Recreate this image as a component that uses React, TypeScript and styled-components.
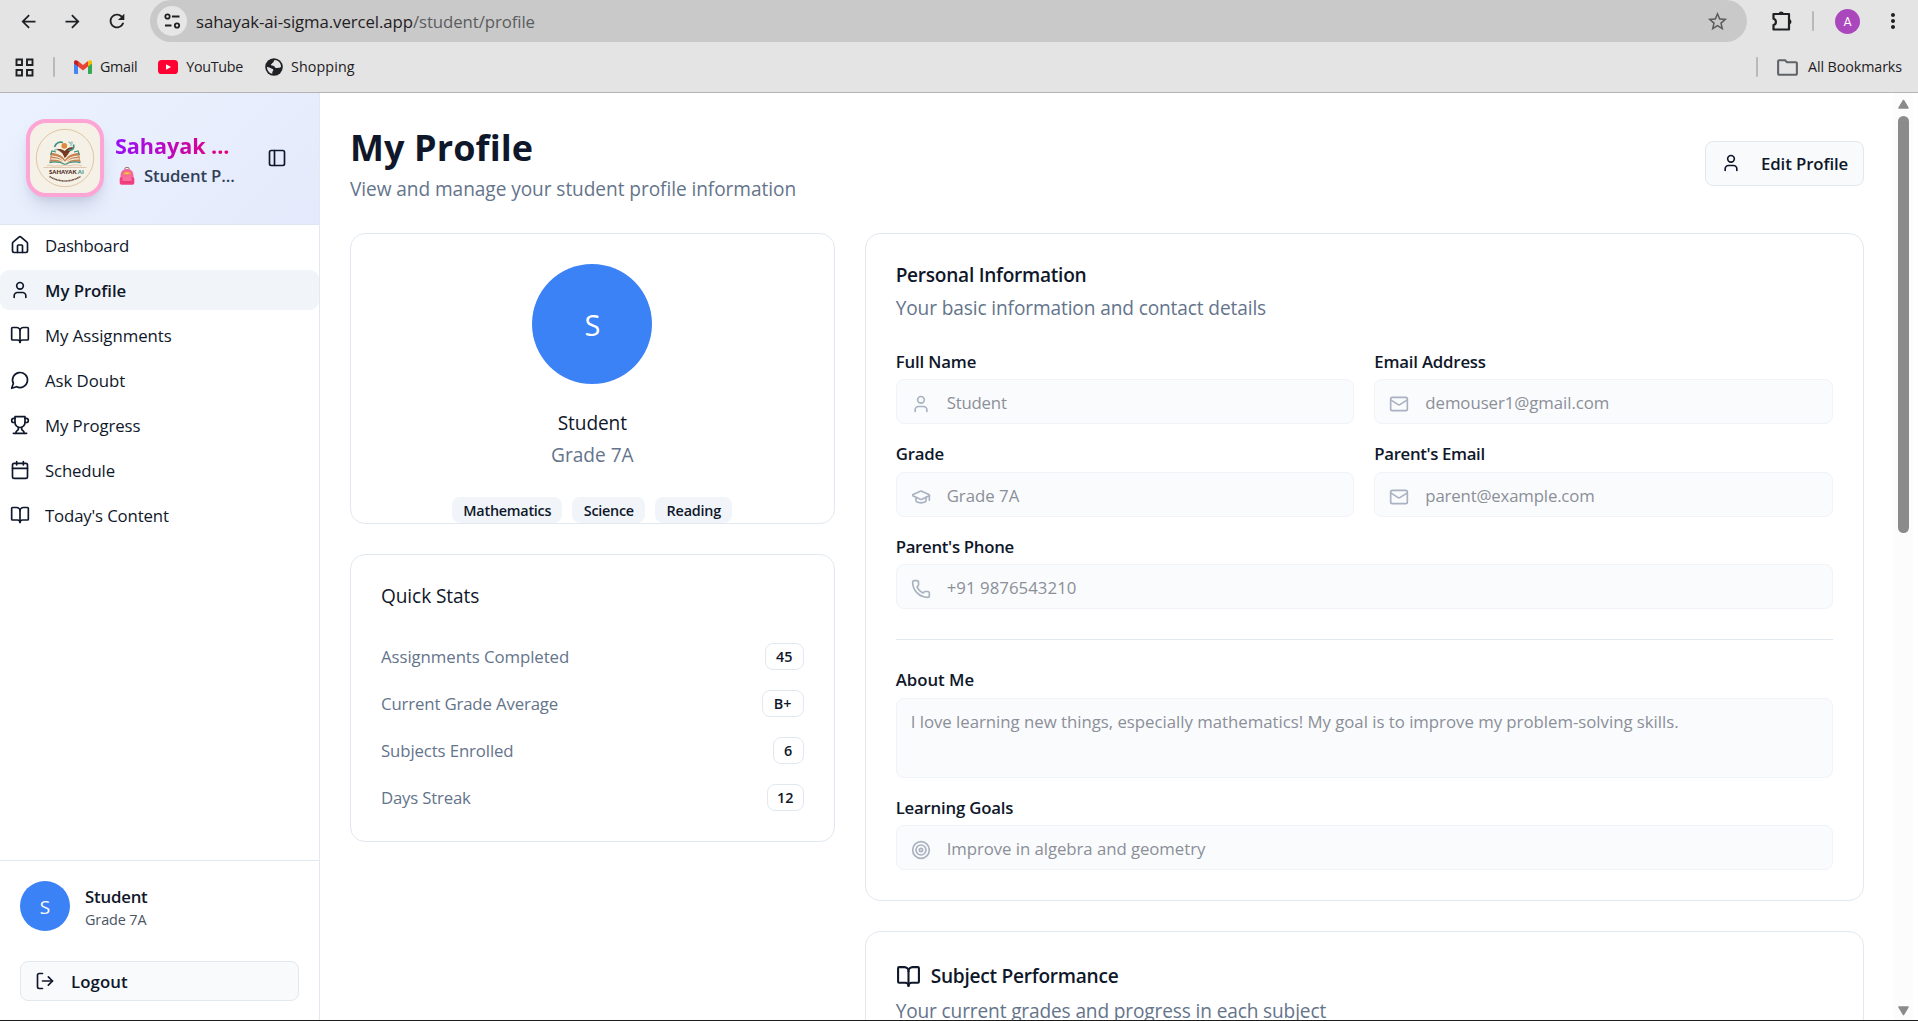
import React from "react";
import styled, { createGlobalStyle, css } from "styled-components";
import {
  BookOpen,
  Calendar,
  GraduationCap,
  House,
  LogOut,
  Mail,
  PanelLeft,
  Phone,
  Target,
  User,
} from "lucide-react";
import { MdArrowBack, MdArrowForward, MdMoreVert, MdOutlineFolder, MdRefresh, MdStarBorder } from "react-icons/md";

const ink = "#0f172a";
const muted = "#64748b";
const line = "#e2e8f0";
const blue = "#3b82f6";

const GlobalStyle = createGlobalStyle`
  *, *::before, *::after { box-sizing: border-box; }
  body {
    margin: 0;
    overflow: hidden;
    background: #fff;
    color: ${ink};
    font-family: "Open Sans", "Noto Sans", sans-serif;
    font-size: 16.8px;
  }
  svg { flex: none; display: block; }
  h1, h2, h3, p { margin: 0; font-weight: 400; }
  button { font: inherit; color: inherit; }
`;

/* letter spacing in px, tuned per string */
const track = css<{ $t?: number }>`
  letter-spacing: ${(p) => p.$t ?? -0.1}px;
  white-space: nowrap;
`;

const Screen = styled.div`
  display: flex;
  flex-direction: column;
  width: 1918px;
  height: 1021px;
  overflow: hidden;
  border-bottom: 1px solid #1c1c1c;
`;

/* ---------- browser chrome ---------- */

const Chrome = styled.header`
  flex: none;
  height: 93px;
  background: #e4e4e4;
  border-bottom: 1px solid #b4b4b4;
  color: #1f2023;
`;

const Toolbar = styled.div`
  display: flex;
  align-items: center;
  height: 42px;
  padding-left: 16px;
`;

const ToolIcon = styled.span<{ $w: number }>`
  display: flex;
  flex: none;
  justify-content: center;
  width: ${(p) => p.$w}px;
`;

const AddressBar = styled.div`
  display: flex;
  align-items: center;
  flex: none;
  width: 1597px;
  height: 42px;
  margin-left: 21px;
  padding: 0 18px 0 7px;
  background: #c9c9c9;
  border-radius: 21px;
`;

const SiteInfo = styled.span`
  display: grid;
  place-items: center;
  width: 30px;
  height: 30px;
  border-radius: 50%;
  background: #e6e6e6;
`;

const Url = styled.span`
  flex: 1;
  margin-left: 9px;
  font-size: 16.8px;
  ${track}
  span { color: #5b5c5e; }
`;

const Divider = styled.span<{ $m: string }>`
  flex: none;
  width: 2px;
  height: 20px;
  margin: ${(p) => p.$m};
  border-radius: 1px;
  background: #b9b9b9;
`;

const ProfileDot = styled.span`
  display: grid;
  flex: none;
  place-items: center;
  width: 25px;
  height: 25px;
  border-radius: 50%;
  background: #ab47bc;
  color: #fff;
  font: 12.5px Roboto, sans-serif;
`;

const Bookmarks = styled.div`
  display: flex;
  align-items: center;
  height: 50px;
  padding: 0 16px 0 15px;
  font-size: 14.3px;
`;

const Bookmark = styled.span<{ $ml: number; $gap: number; $t?: number }>`
  display: flex;
  align-items: center;
  gap: ${(p) => p.$gap}px;
  margin-left: ${(p) => p.$ml}px;
  line-height: 20px;
  ${track}
`;

const BookmarkText = styled.span`
  padding-bottom: 1px;
`;

const Spacer = styled.span`
  flex: 1;
`;

/* ---------- page ---------- */

const Page = styled.div`
  display: flex;
  flex: 1;
  min-height: 0;
`;

const Sidebar = styled.aside`
  display: flex;
  flex-direction: column;
  flex: none;
  width: 320px;
  border-right: 1px solid ${line};
`;

const Brand = styled.div`
  display: flex;
  align-items: center;
  height: 132px;
  padding: 0 32px 2px 26px;
  background: linear-gradient(135deg, #ebf2fe 0%, #e4eafb 100%);
  border-bottom: 1px solid #dfe5f1;
`;

const LogoFrame = styled.div`
  flex: none;
  width: 78px;
  height: 78px;
  border: 4px solid #fda5d5;
  border-radius: 20px;
  background: #f5f1e6;
  box-shadow: 0 12px 19px -4px rgba(40, 55, 100, 0.15), 0 5px 8px -4px rgba(40, 55, 100, 0.12);
`;

const BrandText = styled.div`
  flex: 1;
  margin-left: 11px;
  padding-top: 5px;
`;

const BrandName = styled.div<{ $t?: number }>`
  width: max-content;
  font-size: 21.6px;
  line-height: 30px;
  font-weight: 700;
  ${track}
  background: linear-gradient(90deg, #9810fa, #e60076);
  background-clip: text;
  -webkit-background-clip: text;
  color: transparent;
`;

const Portal = styled.div<{ $t?: number }>`
  display: flex;
  align-items: center;
  gap: 9px;
  padding-left: 4px;
  margin-top: 1px;
  line-height: 28px;
  font-weight: 600;
  color: #314158;
  ${track}
`;

const Nav = styled.nav`
  display: flex;
  flex-direction: column;
  flex: 1;
  gap: 5px;
`;

const NavItem = styled.a<{ $active?: boolean; $t?: number }>`
  display: flex;
  align-items: center;
  gap: 15px;
  height: 40px;
  padding-left: 10px;
  border-radius: 9px;
  background: ${(p) => (p.$active ? "#f1f5f9" : "transparent")};
  font-weight: ${(p) => (p.$active ? 600 : 400)};
  ${track}
`;

const Account = styled.div`
  flex: none;
  height: 160px;
  padding: 20px;
  border-top: 1px solid ${line};
`;

const Person = styled.div`
  display: flex;
  align-items: center;
  gap: 15px;
`;

const Avatar = styled.div<{ $size: number; $font: number }>`
  display: grid;
  place-items: center;
  flex: none;
  width: ${(p) => p.$size}px;
  height: ${(p) => p.$size}px;
  padding-top: 1px;
  border-radius: 50%;
  background: ${blue};
  color: #fff;
  font-size: ${(p) => p.$font}px;
`;

const PersonText = styled.div`
  padding-top: 2px;
`;

const PersonName = styled.div<{ $t?: number }>`
  font-weight: 600;
  line-height: 24px;
  ${track}
`;

const PersonGrade = styled.div<{ $t?: number }>`
  font-size: 14.4px;
  line-height: 21px;
  color: #4a5565;
  ${track}
`;

const Button = styled.button<{ $h: number; $w: number; $gap: number; $pl: number; $t?: number }>`
  display: flex;
  align-items: center;
  gap: ${(p) => p.$gap}px;
  width: ${(p) => p.$w}px;
  height: ${(p) => p.$h}px;
  padding: 0 0 0 ${(p) => p.$pl}px;
  border: 1px solid ${line};
  border-radius: 8px;
  background: #f8fafc;
  font-weight: 600;
  ${track}
`;

const LogoutRow = styled.div`
  margin-top: 30px;
`;

const Main = styled.main`
  flex: 1;
  min-width: 0;
  padding: 30px 30px 0;
  overflow: hidden;
`;

const PageHead = styled.div`
  display: flex;
  justify-content: space-between;
  align-items: center;
  height: 80px;
  margin-bottom: 30px;
`;

const Title = styled.h1<{ $t?: number }>`
  && { font-weight: 700; }
  margin-top: 3px;
  font-size: 36px;
  line-height: 48px;
  ${track}
`;

const Lead = styled.p<{ $t?: number }>`
  margin-top: 1px;
  font-size: 19.1px;
  line-height: 32px;
  color: ${muted};
  ${track}
`;

const Columns = styled.div`
  display: grid;
  grid-template-columns: repeat(3, 1fr);
  gap: 30px;
  align-items: start;
`;

const Column = styled.div<{ $span?: number }>`
  display: grid;
  gap: 30px;
  grid-column: span ${(p) => p.$span ?? 1};
`;

const Card = styled.section<{ $h: number; $pt: number }>`
  height: ${(p) => p.$h}px;
  padding: ${(p) => p.$pt}px 30px 0;
  border: 1px solid ${line};
  border-radius: 15px;
  background: #fff;
`;

const ProfileCard = styled(Card)`
  display: flex;
  flex-direction: column;
  align-items: center;
`;

const CardTitle = styled.h2<{ $strong?: boolean; $t?: number }>`
  && { font-weight: ${(p) => (p.$strong ? 600 : 400)}; }
  display: flex;
  align-items: center;
  gap: 10px;
  font-size: 19.1px;
  line-height: 30px;
  ${track}
`;

const CardSub = styled(Lead)<{ $mt: number }>`
  margin-top: ${(p) => p.$mt}px;
  line-height: 30px;
`;

const ProfileName = styled(CardTitle)`
  margin-top: 24px;
`;

const Badges = styled.div`
  display: flex;
  gap: 10px;
  margin-top: 27px;
`;

const Badge = styled.span<{ $w: number; $outline?: boolean; $t?: number }>`
  display: flex;
  align-items: center;
  justify-content: center;
  width: ${(p) => p.$w}px;
  height: ${(p) => (p.$outline ? 27 : 26)}px;
  border: 1px solid ${(p) => (p.$outline ? line : "transparent")};
  border-radius: 8px;
  background: ${(p) => (p.$outline ? "#fff" : "#f1f5f9")};
  font-size: 14.4px;
  font-weight: 600;
  ${track}
`;

const Stats = styled.div`
  display: grid;
  gap: 20px;
  margin-top: 32px;
`;

const Stat = styled.div<{ $t?: number }>`
  display: flex;
  justify-content: space-between;
  align-items: center;
  height: 27px;
  color: ${muted};
  ${track}
  ${Badge} { color: ${ink}; }
`;

const Fields = styled.div`
  display: grid;
  grid-template-columns: 1fr 1fr;
  gap: 17.2px 20px;
  margin-top: 26px;
`;

const Field = styled.div<{ $wide?: boolean }>`
  grid-column: ${(p) => (p.$wide ? "1 / -1" : "auto")};
`;

const Label = styled.div<{ $t?: number; $gap?: number }>`
  font-weight: 600;
  line-height: 25px;
  margin-bottom: ${(p) => p.$gap ?? 5.2}px;
  ${track}
`;

const Input = styled.div<{ $t?: number }>`
  display: flex;
  align-items: center;
  gap: 16px;
  height: 45px;
  padding: 2px 14px 0;
  border: 1px solid #f0f3f8;
  border-radius: 8px;
  background: #fafbfd;
  color: #8b8f98;
  ${track}
  svg { color: #a9b2c0; margin-top: 3px; }
`;

const TextArea = styled(Input)`
  display: block;
  height: 80px;
  padding-top: 10px;
  line-height: 25px;
`;

const Rule = styled.hr`
  height: 1px;
  margin: 30px 0 0;
  border: 0;
  background: ${line};
`;

const About = styled.div`
  display: grid;
  gap: 17px;
  margin-top: 27px;
`;

const ScrollTrack = styled.div`
  display: flex;
  flex-direction: column;
  align-items: center;
  flex: none;
  width: 19px;
  margin-right: 5px;
  padding: 6px 0 4px;
  background: #fcfcfc;
`;

const Thumb = styled.div`
  width: 11px;
  height: 417px;
  margin: 7px 0 auto;
  border-radius: 6px;
  background: #8b8b8b;
`;

/* ---------- drawings ---------- */

const Tune = () => (
  <svg width="17" height="18" viewBox="0 0 17 18" fill="none" stroke="#1f2023" strokeWidth="1.8">
    <circle cx="3.5" cy="4.5" r="2.2" />
    <path d="M8 4.500h7.500M1 13.500h6.500" />
    <circle cx="13" cy="13.500" r="2.200" />
  </svg>
);

const Puzzle = () => (
  <svg width="22" height="22" viewBox="0 0 22 22" fill="none" stroke="#1f2023" strokeWidth="2.2" strokeLinejoin="round">
    <path d="M2.500 4H18V19.500H2.500V15a3.200 3.200 0 0 0 0-6.200Z" />
    <path d="M7.500 3.500a2.900 2.900 0 0 1 5.500 0ZM18.500 9a2.900 2.900 0 0 1 0 5.500Z" fill="#1f2023" stroke="none" />
  </svg>
);

const AppsGrid = () => (
  <svg width="19" height="19" viewBox="0 0 19 19" fill="none" stroke="#1f2023" strokeWidth="1.9">
    <path d="M1.500 1.500h5.500v5.500h-5.500zM12 1.500h5.500v5.500h-5.500zM1.500 12h5.500v5.500h-5.500zM12 12h5.500v5.500h-5.500z" />
  </svg>
);

const Gmail = () => (
  <svg width="18" height="14" viewBox="0 0 18 14">
    <path d="M0 2.500V12.700c0 .7.500 1.300 1.300 1.300H4V5.800Z" fill="#4285f4" />
    <path d="M18 2.500V12.700c0 .7-.5 1.300-1.300 1.300H14V5.800Z" fill="#34a853" />
    <path d="M14 1.400C15.500-.200 18-.200 18 2v1.500l-4 3Z" fill="#fbbc04" />
    <path d="M0 3.500V2C0-.200 2.500-.200 4 1.100v5.500Z" fill="#c5221f" />
    <path d="M4 6.600V1.100l5 3.900 5-3.900v5.500l-5 3.900Z" fill="#ea4335" />
  </svg>
);

const YouTube = () => (
  <svg width="20" height="14" viewBox="0 0 20 14">
    <rect width="20" height="14" rx="3.600" fill="#ff0033" />
    <path d="M8 4.200v5.600l5-2.800Z" fill="#fff" />
  </svg>
);

const Globe = () => (
  <svg width="18" height="18" viewBox="0 0 18 18">
    <circle cx="9" cy="9" r="8.800" fill="#202124" />
    <path d="M9.500 2c-1 1.200-.3 1.700-1.500 2.400-1.200.5-.7 1.700-2 1.900-.4 1 .6 1.400 2.200 1.500 1.800.2 1.300 1.900 2.600 2.200 1.200.2 1.800-.6 3.200-.3 1.200.3 1.900-.4 2-1.100C16 5 13.300 2.200 9.500 2ZM2 8.700c1.700.5 3.300 1 4.300 1.800.9.700 1.800.3 2 1.400.1 1.200-1.100 1.200-1 2.300v1.600C4.100 15.100 1.900 12.200 2 8.700Z" fill="#e4e4e4" />
  </svg>
);

const Bubble = () => (
  <svg width="20" height="20" viewBox="0 0 24 24" fill="none" stroke="currentColor" strokeWidth="2" strokeLinecap="round" strokeLinejoin="round">
    <path d="M7.900 20A9 9 0 1 0 4 16.100L2 22Z" />
  </svg>
);

const TrophyIcon = () => (
  <svg width="20" height="20" viewBox="0 0 24 24" fill="none" stroke="currentColor" strokeWidth="2" strokeLinecap="round" strokeLinejoin="round">
    <path d="M6 9H4.500a2.500 2.500 0 0 1 0-5H6M18 9h1.500a2.500 2.500 0 0 0 0-5H18M4 22h16" />
    <path d="M10 14.660V17c0 .55-.47.98-.97 1.210C7.850 18.750 7 20.240 7 22M14 14.660V17c0 .55.47.98.97 1.210C16.150 18.750 17 20.240 17 22" />
    <path d="M18 2H6v7a6 6 0 0 0 12 0V2Z" />
  </svg>
);

const Backpack = () => (
  <svg width="16" height="18" viewBox="0 0 16 18">
    <path d="M5.800 2.500V1.800a2.200 1.500 0 0 1 4.400 0v.7" fill="none" stroke="#9c6a63" strokeWidth="1" />
    <path d="M1.500 9C1.500 4.500 4 2 8 2S14.500 4.500 14.500 9v8h-13Z" fill="#f0699b" />
    <path d="M5 5.200h6l.8 2.300H4.200Z" fill="#f3a63b" />
    <path d="M6.500 5.500h3v1.300h-3Z" fill="#f8cf52" />
    <rect x="0.700" y="10" width="14.600" height="7.700" rx="1.800" fill="#f4407f" />
    <path d="M3.500 9.500h9v3.700a1.300 1.300 0 0 1-1.300 1.300H4.800a1.300 1.300 0 0 1-1.300-1.300Z" fill="#fb6f9f" />
    <path d="M3.500 14.800h9" stroke="#d92c6c" strokeWidth="0.800" />
  </svg>
);

const Logo = () => (
  <svg width="70" height="70" viewBox="0 0 70 70">
    <circle cx="35" cy="35" r="28.700" fill="none" stroke="#dfbf9b" strokeWidth="0.900" />
    <path d="M21 30c6 0 11 2 14 7 3-5 8-7 14-7l1.500 9c-6-1-11-.5-15.500 2-4.500-2.500-9.500-3-15.500-2Z" fill="#c98350" />
    <path d="M21.500 33c6 0 10.500 2.500 13.500 6.500 3-4 7.500-6.500 13.500-6.500M20.500 36c7-.5 11.500 1.500 14.500 4.500 3-3 7.500-5 14.500-4.500" fill="none" stroke="#f5f1e6" strokeWidth="1.100" />
    <path d="M19.500 39.500c6-1.200 11-.5 15.500 2 4.500-2.500 9.500-3.200 15.500-2" fill="none" stroke="#3f8f80" strokeWidth="1.300" />
    <path d="M20.500 32l1.500-4 4 1M49.500 32l-1.500-4-4 1" fill="none" stroke="#3f8f80" strokeWidth="1.200" />
    <path d="M25 26.500c4-1 7-.5 9.500 1.500 3-3 5.500-4.500 9-3.500-1.500 3-4 3.500-5 6-1.500 2.500-2.500 3.500-4 4.500-1-4.500-4-7.500-9.500-8.500Z" fill="#75391f" />
    <path d="M24.500 24c1.500-4 5-5.500 8.500-4.500M38.500 27c4.500 1 6-2.500 5-5.500" fill="none" stroke="#3f8f80" strokeWidth="1.700" />
    <path d="M38.500 19c2 .5 3 2 2.500 4M41.500 18.500l1 2M24 27.500l3.500-1.500" fill="none" stroke="#8bc0b4" strokeWidth="1.300" />
    <circle cx="34.300" cy="22.800" r="2.900" fill="#e0893a" />
    <path d="M13.500 44.500h43M17 43c3-2 5 .8 8 0s5 .8 8-.5 5 .8 8 0 8-1 11 .5" fill="none" stroke="#dcbc9e" strokeWidth="0.800" />
    <text x="19" y="50.600" fontFamily="Lato, sans-serif" fontWeight="900" fontSize="5.900" letterSpacing="0.050" fill="#4a2418">
      SAHAYAK <tspan fill="#3f8f80">AI</tspan>
    </text>
    <path d="M19.500 53.500Q35 62.500 50.500 53.500" fill="none" stroke="#6b4a3a" strokeWidth="1.500" strokeDasharray="1.300 0.350 0.900 0.300 1.100 0.400" />
  </svg>
);

const Arrow = ({ down }: { down?: boolean }) => (
  <svg width="13" height="10" viewBox="0 0 13 10">
    <path
      d={down ? "M2 1h9L6.500 8.500Z" : "M2 9h9L6.500 1.500Z"}
      fill="#8b8b8b"
      stroke="#8b8b8b"
      strokeWidth="1.500"
      strokeLinejoin="round"
    />
  </svg>
);

/* ---------- data ---------- */

const navItems = [
  { label: "Dashboard", icon: <House size={20} />, t: -0.3 },
  { label: "My Profile", icon: <User size={20} />, active: true, t: -0.05 },
  { label: "My Assignments", icon: <BookOpen size={20} />, t: -0.05 },
  { label: "Ask Doubt", icon: <Bubble />, t: -0.05 },
  { label: "My Progress", icon: <TrophyIcon />, t: -0.08 },
  { label: "Schedule", icon: <Calendar size={20} />, t: -0.15 },
  { label: "Today's Content", icon: <BookOpen size={20} />, t: -0.15 },
];

const stats = [
  { label: "Assignments Completed", value: "45", w: 39, t: -0.07 },
  { label: "Current Grade Average", value: "B+", w: 42, t: -0.15 },
  { label: "Subjects Enrolled", value: "6", w: 31, t: -0.12 },
  { label: "Days Streak", value: "12", w: 37, t: -0.2 },
];

const fields = [
  { label: "Full Name", value: "Student", icon: <User size={20} />, lt: -0.15, t: -0.2 },
  { label: "Email Address", value: "demouser1@gmail.com", icon: <Mail size={20} />, lt: -0.2, t: -0.06 },
  { label: "Grade", value: "Grade 7A", icon: <GraduationCap size={20} />, lt: -0.2, t: 0 },
  { label: "Parent's Email", value: "parent@example.com", icon: <Mail size={20} />, lt: -0.35, t: -0.17 },
  { label: "Parent's Phone", value: "+91 9876543210", icon: <Phone size={20} />, lt: -0.3, t: 0.05, wide: true },
];

export default function App() {
  return (
    <Screen>
      <GlobalStyle />
      <Chrome>
        <Toolbar>
          <ToolIcon $w={24}><MdArrowBack size={21} /></ToolIcon>
          <ToolIcon $w={65}><MdArrowForward size={21} /></ToolIcon>
          <ToolIcon $w={24}><MdRefresh size={22} /></ToolIcon>
          <AddressBar>
            <SiteInfo><Tune /></SiteInfo>
            <Url $t={-0.08}>sahayak-ai-sigma.vercel.app<span>/student/profile</span></Url>
            <MdStarBorder size={23} color="#5b5c5e" />
          </AddressBar>
          <ToolIcon $w={69}><Puzzle /></ToolIcon>
          <Divider $m="0 21px 0 -4px" />
          <ProfileDot>A</ProfileDot>
          <ToolIcon $w={65}><MdMoreVert size={24} /></ToolIcon>
        </Toolbar>
        <Bookmarks>
          <AppsGrid />
          <Divider $m="0 0 0 19px" />
          <Bookmark $ml={19} $gap={8} $t={-0.3}><Gmail /><BookmarkText>Gmail</BookmarkText></Bookmark>
          <Bookmark $ml={21} $gap={8} $t={-0.3}><YouTube /><BookmarkText>YouTube</BookmarkText></Bookmark>
          <Bookmark $ml={22} $gap={8} $t={0.1}><Globe /><BookmarkText>Shopping</BookmarkText></Bookmark>
          <Spacer />
          <Divider $m="0 0 0 0" />
          <Bookmark $ml={17} $gap={8} $t={-0.1}>
            <MdOutlineFolder size={25} color="#5f6368" />
            <BookmarkText>All Bookmarks</BookmarkText>
          </Bookmark>
        </Bookmarks>
      </Chrome>

      <Page>
        <Sidebar>
          <Brand>
            <LogoFrame><Logo /></LogoFrame>
            <BrandText>
              <BrandName $t={-0.05}>Sahayak ...</BrandName>
              <Portal $t={-0.15}><Backpack />Student P...</Portal>
            </BrandText>
            <PanelLeft size={20} />
          </Brand>
          <Nav>
            {navItems.map((n) => (
              <NavItem key={n.label} $active={n.active} $t={n.t}>
                {n.icon}
                {n.label}
              </NavItem>
            ))}
          </Nav>
          <Account>
            <Person>
              <Avatar $size={50} $font={19}>S</Avatar>
              <PersonText>
                <PersonName $t={-0.2}>Student</PersonName>
                <PersonGrade $t={-0.1}>Grade 7A</PersonGrade>
              </PersonText>
            </Person>
            <LogoutRow>
              <Button $w={279} $h={40} $gap={16} $pl={14} $t={0.1}>
                <LogOut size={20} />
                Logout
              </Button>
            </LogoutRow>
          </Account>
        </Sidebar>

        <Main>
          <PageHead>
            <div>
              <Title $t={0.1}>My Profile</Title>
              <Lead $t={-0.07}>View and manage your student profile information</Lead>
            </div>
            <Button $w={159} $h={45} $gap={20} $pl={15} $t={-0.1}>
              <User size={20} />
              Edit Profile
            </Button>
          </PageHead>

          <Columns>
            <Column>
              <ProfileCard $h={291} $pt={30}>
                <Avatar $size={120} $font={29}>S</Avatar>
                <ProfileName>Student</ProfileName>
                <CardSub $mt={2} $t={0}>Grade 7A</CardSub>
                <Badges>
                  <Badge $w={110} $t={-0.25}>Mathematics</Badge>
                  <Badge $w={73} $t={-0.25}>Science</Badge>
                  <Badge $w={77} $t={-0.2}>Reading</Badge>
                </Badges>
              </ProfileCard>
              <Card $h={288} $pt={26}>
                <CardTitle $t={-0.1}>Quick Stats</CardTitle>
                <Stats>
                  {stats.map((s) => (
                    <Stat key={s.label} $t={s.t}>
                      {s.label}
                      <Badge $w={s.w} $outline $t={0}>{s.value}</Badge>
                    </Stat>
                  ))}
                </Stats>
              </Card>
            </Column>

            <Column $span={2}>
              <Card $h={668} $pt={26}>
                <CardTitle $strong $t={-0.27}>Personal Information</CardTitle>
                <CardSub $mt={3} $t={-0.12}>Your basic information and contact details</CardSub>
                <Fields>
                  {fields.map((f) => (
                    <Field key={f.label} $wide={f.wide}>
                      <Label $t={f.lt}>{f.label}</Label>
                      <Input $t={f.t}>
                        {f.icon}
                        {f.value}
                      </Input>
                    </Field>
                  ))}
                </Fields>
                <Rule />
                <About>
                  <Field>
                    <Label $t={0} $gap={6}>About Me</Label>
                    <TextArea $t={-0.02}>
                      I love learning new things, especially mathematics! My goal is to improve my problem-solving skills.
                    </TextArea>
                  </Field>
                  <Field>
                    <Label $t={-0.2} $gap={5}>Learning Goals</Label>
                    <Input $t={-0.06}><Target size={20} />Improve in algebra and geometry</Input>
                  </Field>
                </About>
              </Card>
              <Card $h={300} $pt={29}>
                <CardTitle $strong $t={-0.25}><BookOpen size={25} />Subject Performance</CardTitle>
                <CardSub $mt={5} $t={-0.14}>Your current grades and progress in each subject</CardSub>
              </Card>
            </Column>
          </Columns>
        </Main>

        <ScrollTrack>
          <Arrow />
          <Thumb />
          <Arrow down />
        </ScrollTrack>
      </Page>
    </Screen>
  );
}
